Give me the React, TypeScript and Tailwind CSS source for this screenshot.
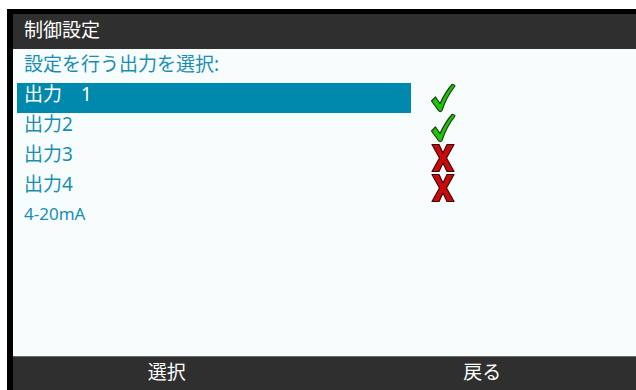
import type { ReactNode } from 'react';

const font = { fontFamily: '"Noto Sans", "Noto Sans CJK JP", sans-serif' };

function Check() {
  return (
    <svg width="26" height="30" viewBox="0 0 26 30">
      <path
        d="M1.5 18 L5.5 14 L10 20.5 C14 12 18 6 22 1.5 C23 1 24.5 2 25 3 C19.5 10 15 18 12 27.5 C11 29 9.5 29 8.5 27.5 Z"
        fill="#1ec40a"
        stroke="#1d3b12"
        strokeWidth="1.2"
        strokeLinejoin="round"
      />
    </svg>
  );
}

function Cross() {
  return (
    <svg width="26" height="30" viewBox="0 0 26 30">
      <path
        d="M2 1.5 L9 1.5 L13 10 L17 1.5 L24 1.5 L16.5 15 L24 28.5 L17 28.5 L13 20 L9 28.5 L2 28.5 L9.5 15 Z"
        fill="#cc0a0a"
        stroke="#3a0a0a"
        strokeWidth="1.2"
        strokeLinejoin="round"
      />
    </svg>
  );
}

function Row({
  label,
  selected,
  icon,
  small,
}: {
  label: string;
  selected?: boolean;
  icon?: ReactNode;
  small?: boolean;
}) {
  return (
    <div className="flex h-[30px] items-start">
      <div
        className={
          'h-[30px] w-[394px] pl-[7px] leading-[22px] ' +
          (selected ? 'bg-[#0189ad] text-white' : 'text-[#1a8db3]') +
          (small ? ' text-[17px]' : ' text-[19px]')
        }
      >
        {label}
      </div>
      <div className="ml-[19px] flex h-[30px] w-[26px] items-start">{icon}</div>
    </div>
  );
}

export default function App() {
  return (
    <div className="h-[390px] w-[636px] bg-white pl-[7px] pt-[9px]" style={font}>
      <div className="flex h-full flex-col border-l-[6px] border-t-[5px] border-black">
        <div className="flex h-[35px] items-center bg-[#2f2f2f] pb-[2px] pl-[11px] text-[19px] text-white">
          制御設定
        </div>
        <div className="flex-1 bg-[#f7fdfd]">
          <div className="h-[34px] pl-[11px] pt-[4px] text-[19px] leading-[22px] text-[#1a8db3]">
            設定を行う出力を選択:
          </div>
          <div className="pl-[4px]">
            <Row label={'出力\u30001'} selected icon={<Check />} />
            <Row label="出力2" icon={<Check />} />
            <Row label="出力3" icon={<Cross />} />
            <Row label="出力4" icon={<Cross />} />
            <Row label="4-20mA" small />
          </div>
        </div>
        <div className="flex h-[34px] border-t border-[#6a6a6a] bg-[#2f2f2f] text-[19px] text-white">
          <div className="flex flex-1 items-center justify-center pb-[2px]">選択</div>
          <div className="flex flex-1 items-center justify-center pb-[2px] pl-[8px]">戻る</div>
        </div>
      </div>
    </div>
  );
}
